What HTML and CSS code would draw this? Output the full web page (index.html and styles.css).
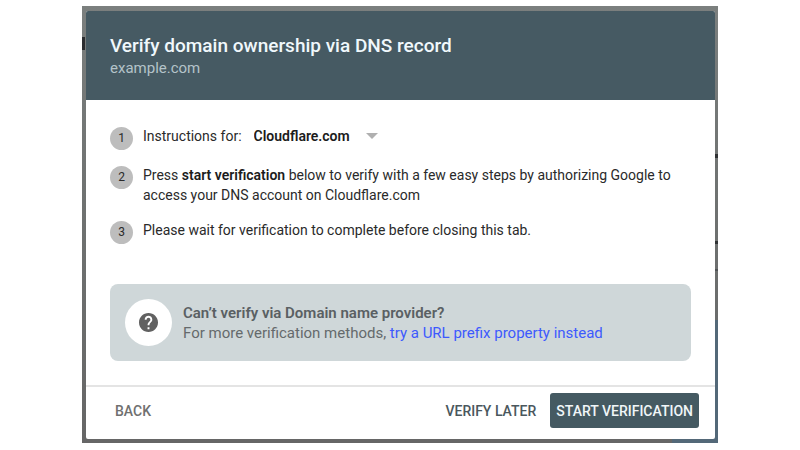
FILE: index.html
```html
<!DOCTYPE html>
<html lang="en">
<head>
    <meta charset="UTF-8">
    <meta name="viewport" content="width=device-width, initial-scale=1.0">
    <title>Verify domain ownership</title>
    <link rel="stylesheet" href="styles.css">
</head>
<body>
    <div class="backdrop">
        <main class="dialog">
            <header class="dialog-header">
                <h1>Verify domain ownership via DNS record</h1>
                <p>example.com</p>
            </header>

            <div class="dialog-body">
                <ol class="steps">
                    <li>
                        <span class="step-number">1</span>
                        <div class="provider">
                            <label for="provider-select">Instructions for:</label>
                            <div class="select-wrapper">
                                <select id="provider-select">
                                    <option>Cloudflare.com</option>
                                </select>
                                <svg class="arrow" viewBox="0 0 12 6" aria-hidden="true"><path d="M0 0h12L6 6z"/></svg>
                            </div>
                        </div>
                    </li>
                    <li>
                        <span class="step-number">2</span>
                        <p>Press <strong>start verification</strong> below to verify with a few easy steps by authorizing Google to access your DNS account on Cloudflare.com</p>
                    </li>
                    <li>
                        <span class="step-number">3</span>
                        <p>Please wait for verification to complete before closing this tab.</p>
                    </li>
                </ol>

                <section class="hint">
                    <span class="hint-icon">
                        <svg viewBox="2 2 20 20" aria-hidden="true"><path d="M12 2C6.48 2 2 6.48 2 12s4.48 10 10 10 10-4.48 10-10S17.52 2 12 2zm1 17h-2v-2h2v2zm2.07-7.75l-.9.92C13.45 12.9 13 13.5 13 15h-2v-.5c0-1.1.45-2.1 1.17-2.83l1.24-1.26c.37-.36.59-.86.59-1.41 0-1.1-.9-2-2-2s-2 .9-2 2H8c0-2.21 1.79-4 4-4s4 1.79 4 4c0 .88-.36 1.68-.93 2.25z"/></svg>
                    </span>
                    <div>
                        <h2>Can’t verify via Domain name provider?</h2>
                        <p>For more verification methods, <a href="#">try a URL prefix property instead</a></p>
                    </div>
                </section>
            </div>

            <footer class="dialog-footer">
                <button type="button" class="back-button">BACK</button>
                <button type="button" class="later-button">VERIFY LATER</button>
                <button type="button" class="start-button">START VERIFICATION</button>
            </footer>
        </main>
    </div>
</body>
</html>
```
FILE: styles.css
```css
* {
    box-sizing: border-box;
}

body {
    margin: 0;
    padding: 6px 16px;
    background-color: #fff;
    color: #2a2a2a;
    font-family: Roboto, sans-serif;
    font-size: 14px;
    line-height: 20px;
}

h1, h2, p, ol {
    margin: 0;
    padding: 0;
}

/* Dimmed page behind the dialog */
.backdrop {
    max-width: 636px;
    margin: 0 auto;
    padding: 5px 3px 4px 4px;
    background:
        linear-gradient(#2b2d30, #2b2d30) left 31px / 3px 13px no-repeat,
        linear-gradient(#303234, #303234) right 148px / 3px 4px no-repeat,
        linear-gradient(#303234, #303234) right 235px / 3px 3px no-repeat,
        linear-gradient(#505355, #505355) right 263px / 3px 2px no-repeat,
        linear-gradient(#536878, #536878) right bottom / 46px 123px no-repeat,
        linear-gradient(#7b7f7e, #707372 40%, #666);
}

.dialog {
    background-color: #fff;
    border-radius: 2px;
    overflow: hidden;
}

.dialog-header {
    padding: 23px 24px 22px;
    background-color: #465a63;
    color: #b4c3c9;
    font-size: 15px;
}

.dialog-header h1 {
    color: #f0f8fc;
    font-size: 19px;
    font-weight: 500;
    line-height: 24px;
}

.dialog-body {
    padding: 26px 24px 24px;
}

.steps {
    display: grid;
    gap: 15px;
    margin-bottom: 40px;
    list-style: none;
}

.steps li {
    display: flex;
    gap: 10px;
    align-items: flex-start;
}

.steps strong {
    color: #1c1c1c;
    font-weight: 600;
}

.step-number {
    flex: none;
    width: 23px;
    margin-top: 1px;
    border-radius: 50%;
    background-color: #bdbdbd;
    font-size: 12px;
    line-height: 23px;
    text-align: center;
}

.provider {
    display: flex;
    gap: 12px;
}

.select-wrapper {
    display: flex;
    position: relative;
    align-items: center;
}

.select-wrapper select {
    width: 124px;
    padding: 0;
    border: none;
    background: transparent;
    color: #1c1c1c;
    font: inherit;
    font-weight: 600;
    cursor: pointer;
    appearance: none;
}

.arrow {
    position: absolute;
    right: 0;
    width: 12px;
    height: 6px;
    fill: #b0b0b0;
    pointer-events: none;
}

.hint {
    display: flex;
    gap: 11px;
    align-items: center;
    padding: 15px;
    border-radius: 8px;
    background-color: #cfd7d9;
    color: #656a6c;
    font-size: 15px;
}

.hint h2 {
    color: #5a6063;
    font-size: 15px;
    font-weight: 600;
}

.hint a {
    color: #3d5afe;
    text-decoration: none;
}

.hint-icon {
    display: flex;
    flex: none;
    width: 47px;
    height: 47px;
    align-items: center;
    justify-content: center;
    border-radius: 50%;
    background-color: #fff;
}

.hint-icon svg {
    width: 19px;
    height: 19px;
    fill: #616161;
}

.dialog-footer {
    display: flex;
    gap: 8px;
    align-items: center;
    padding: 6px 16px 11px 23px;
    border-top: 2px solid #e4e4e4;
}

.dialog-footer button {
    height: 35px;
    padding: 0 6px;
    border: none;
    border-radius: 3px;
    background: transparent;
    color: #4a575d;
    font-family: inherit;
    font-size: 14px;
    font-weight: 500;
    cursor: pointer;
}

.dialog-footer .back-button {
    margin-right: auto;
    color: #707070;
}

.dialog-footer .start-button {
    background-color: #455a62;
    color: #f0f6f8;
}
```
